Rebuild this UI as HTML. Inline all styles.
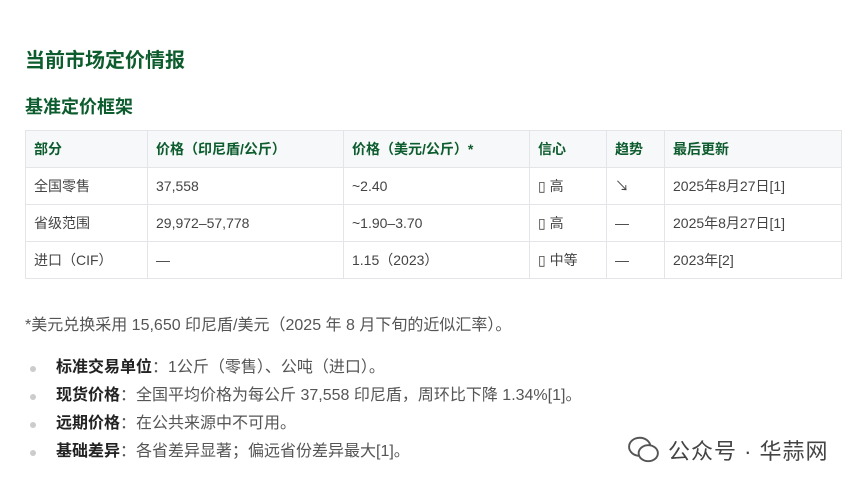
<!DOCTYPE html>
<html><head><meta charset="utf-8"><style>
body{margin:0;width:856px;height:484px;background:#fff;font-family:"Liberation Sans","Noto Sans CJK SC",sans-serif;color:#333;position:relative;overflow:hidden}
.h1{position:absolute;left:25px;top:44px;font-size:20px;font-weight:bold;color:#0d5c2e}
.h2{position:absolute;left:25px;top:93px;font-size:18px;font-weight:bold;color:#0d5c2e}
table{position:absolute;left:25px;top:130px;border-collapse:collapse;font-size:14px;table-layout:fixed;width:816px}
td,th{border:1px solid #e3e5e8;padding:0 0 0 8px;height:36px;text-align:left;color:#444;font-weight:normal;white-space:nowrap}
th{background:#f7f8fa;color:#0d5c2e;font-weight:bold}
.fn{position:absolute;left:25px;top:311px;font-size:16px;color:#555}
ul{position:absolute;left:28px;top:356px;margin:0;padding:0;list-style:none;font-size:16px;color:#555}
li{height:28px;line-height:24px;position:relative;padding-left:28px}
li:before{content:"";position:absolute;left:2px;top:10px;width:6px;height:6px;border-radius:3px;background:#ccc}
b{color:#222}
.wm{position:absolute;left:628px;top:434px;font-size:22px;letter-spacing:1px;color:#444;display:flex;align-items:center;gap:8px}
</style></head><body>
<div class="h1">当前市场定价情报</div>
<div class="h2">基准定价框架</div>
<table>
<colgroup><col style="width:122px"><col style="width:196px"><col style="width:186px"><col style="width:77px"><col style="width:58px"><col style="width:177px"></colgroup>
<tr><th>部分</th><th>价格（印尼盾/公斤）</th><th>价格（美元/公斤）*</th><th>信心</th><th>趋势</th><th>最后更新</th></tr>
<tr><td>全国零售</td><td>37,558</td><td>~2.40</td><td>▯ 高</td><td>↘</td><td>2025年8月27日[1]</td></tr>
<tr><td>省级范围</td><td>29,972–57,778</td><td>~1.90–3.70</td><td>▯ 高</td><td>—</td><td>2025年8月27日[1]</td></tr>
<tr><td>进口（CIF）</td><td>—</td><td>1.15（2023）</td><td>▯ 中等</td><td>—</td><td>2023年[2]</td></tr>
</table>
<div class="fn">*美元兑换采用 15,650 印尼盾/美元（2025 年 8 月下旬的近似汇率）。</div>
<ul>
<li><b>标准交易单位</b>：1公斤（零售）、公吨（进口）。</li>
<li><b>现货价格</b>：全国平均价格为每公斤 37,558 印尼盾，周环比下降 1.34%[1]。</li>
<li><b>远期价格</b>：在公共来源中不可用。</li>
<li><b>基础差异</b>：各省差异显著；偏远省份差异最大[1]。</li>
</ul>
<div class="wm"><svg width="32" height="28" viewBox="0 0 30 26"><ellipse cx="11" cy="10" rx="10" ry="8.5" fill="none" stroke="#555" stroke-width="1.8"/><ellipse cx="19" cy="16" rx="9" ry="7.5" fill="#fff" stroke="#555" stroke-width="1.8"/></svg><span>公众号 · 华蒜网</span></div>
</body></html>
